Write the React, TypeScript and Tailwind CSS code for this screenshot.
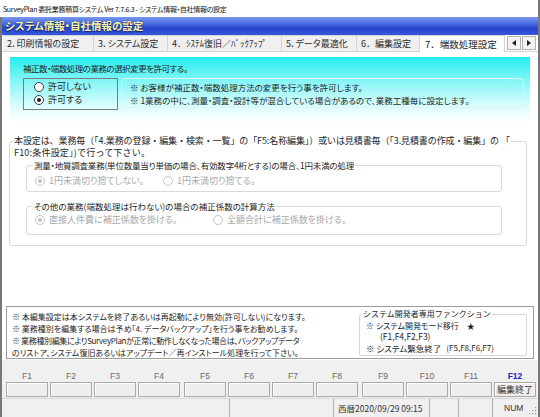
import React from "react";

function Radio({
  checked,
  disabled,
  label,
  className = "",
}: {
  checked?: boolean;
  disabled?: boolean;
  label: string;
  className?: string;
}) {
  return (
    <div className={`flex items-center gap-[4px] ${className}`}>
      <span
        className={`w-[10px] h-[10px] shrink-0 rounded-full border bg-white flex items-center justify-center ${
          disabled ? "border-[#c6c6c6]" : "border-[#3a3a3a]"
        }`}
      >
        {checked && (
          <span
            className={`w-[4px] h-[4px] rounded-full ${disabled ? "bg-[#c2c2c2]" : "bg-[#1a1a1a]"}`}
          />
        )}
      </span>
      <span className={`whitespace-nowrap text-[9px] ${disabled ? "text-[#a8a8a8]" : "text-[#1e1e1e]"}`}>{label}</span>
    </div>
  );
}

const tabs = [
  { label: "2．印刷情報の設定", cls: "w-[91px]" },
  { label: "3．システム設定", cls: "w-[74px]" },
  { label: "4．ｼｽﾃﾑ復旧／ﾊﾞｯｸｱｯﾌﾟ", cls: "w-[114px] [font-feature-settings:normal]" },
  { label: "5．データ最適化", cls: "w-[75px]" },
  { label: "6．編集設定", cls: "w-[63px] [font-feature-settings:normal]" },
];

const groups = [
  ["F1", "F2", "F3", "F4"],
  ["F5", "F6", "F7", "F8"],
  ["F9", "F10", "F11", "F12"],
];

export default function App() {
  return (
    <div className="w-[540px] h-[417px] overflow-hidden bg-white flex flex-col font-['Noto_Sans_CJK_JP','Noto_Sans',sans-serif] [font-feature-settings:'palt'] text-[8.5px] leading-[12px] text-[#1e1e1e]">
      {/* title bar */}
      <div className="h-[17px] shrink-0 flex items-center pl-[3px] border-r-2 border-[#777777] text-[7px] tracking-[-0.3px] text-[#111] whitespace-nowrap">
        SurveyPlan 委託業務積算システム Ver 7.7.6.3 - システム情報・自社情報の設定
      </div>

      <div className="flex-1 min-h-0 flex flex-col border-l-2 border-r-2 border-[#777777]">
        {/* blue header */}
        <div className="h-[18px] shrink-0 flex items-center pl-[3px] bg-[linear-gradient(180deg,#7a99ef_0%,#4b6ee3_35%,#2444cf_65%,#3758dc_100%)]">
          <span className="text-[10.5px] leading-[12px] font-bold text-[#f6f6a4] [text-shadow:0_0_1px_#10207a,0_1px_1px_#10207a]">
            システム情報・自社情報の設定
          </span>
        </div>

        {/* tabs */}
        <div className="h-[17px] shrink-0 flex bg-white text-[9px]">
          <div className="w-[1px] border-b border-[#d4d4d4]" />
          {tabs.map((t) => (
            <div
              key={t.label}
              className={`${t.cls} h-full flex items-center pl-[4px] bg-[#f0f0f0] border-t border-r border-b border-[#d4d4d4] text-[#2a2a2a] whitespace-nowrap`}
            >
              {t.label}
            </div>
          ))}
          <div className="w-[85px] h-full flex items-center pl-[5px] bg-white border-t border-r border-[#d4d4d4] text-[#1e1e1e] whitespace-nowrap text-[9.5px] [font-feature-settings:normal]">
            7．端数処理設定
          </div>
          <div className="flex-1 h-full flex items-center gap-[1px] pl-[2px] border-b border-[#d4d4d4]">
            <div className="w-[14px] h-[14px] border border-[#b4b4b4] bg-[#f4f4f4] flex items-center justify-center">
              <svg width="4" height="6" viewBox="0 0 4 6">
                <path d="M4 0 L0 3 L4 6 Z" fill="#222" />
              </svg>
            </div>
            <div className="w-[14px] h-[14px] border border-[#b4b4b4] bg-[#f4f4f4] flex items-center justify-center">
              <svg width="4" height="6" viewBox="0 0 4 6">
                <path d="M0 0 L4 3 L0 6 Z" fill="#222" />
              </svg>
            </div>
          </div>
        </div>

        {/* content */}
        <div className="flex-1 min-h-0 flex flex-col bg-white pt-[5px]">
          {/* cyan panel */}
          <div className="mx-[8px] h-[65px] shrink-0 pl-[13px] pt-[5px] bg-[linear-gradient(180deg,#22eeee_0%,#8cf6f6_40%,#d9fdfd_75%,#ffffff_100%)]">
            <div className="h-[12px] tracking-[-0.5px]">補正数・端数処理の業務の選択変更を許可する。</div>
            <div className="mt-[4px] flex items-start">
              <div className="w-[95px] h-[32px] border border-[#7c7c7c] pl-[10px] pt-[1px] flex flex-col">
                <Radio label="許可しない" className="h-[13px]" />
                <Radio label="許可する" checked className="h-[13px]" />
              </div>
              <div className="ml-[3px] mr-[6px] flex-1 h-[30px] pl-[8px] pt-[1px] border border-[#e2f2f2] rounded-[4px] flex flex-col">
                <div className="h-[13px] flex items-center">※ お客様が補正数・端数処理方法の変更を行う事を許可します。</div>
                <div className="h-[13px] flex items-center">
                  ※ 1業務の中に、測量・調査・設計等が混合している場合があるので、業務工種毎に設定します。
                </div>
              </div>
            </div>
          </div>

          {/* outer group */}
          <fieldset className="mt-[13px] ml-[7px] mr-[11px] shrink-0 border border-[#d8d8d8] rounded-[3px] pb-[10px]">
            <legend className="ml-[3px] px-[1px] h-[12px] whitespace-nowrap leading-[12px] text-[9px] tracking-[-0.1px] [font-feature-settings:normal]">
              本設定は、業務毎（「4.業務の登録・編集・検索・一覧」の「F5:名称編集」）或いは見積書毎（「3.見積書の作成・編集」の 「
            </legend>
            <div className="pl-[4px] h-[12px] text-[9px] tracking-[0.2px] [font-feature-settings:normal]">
              F10:条件設定」)で行って下さい。
            </div>

            <fieldset className="ml-[16px] mr-[24px] border border-[#d8d8d8] rounded-[3px] pt-[4px] pb-[4px]">
              <legend className="ml-[6px] px-[1px] h-[12px] whitespace-nowrap tracking-[-0.2px]">
                測量・地質調査業務(単位数量当り単価の場合、有効数字4桁とする)の場合、1円未満の処理
              </legend>
              <div className="flex pl-[8px] h-[12px]">
                <Radio disabled checked label="1円未満切り捨てしない。" className="w-[128px]" />
                <Radio disabled label="1円未満切り捨てる。" />
              </div>
            </fieldset>

            <fieldset className="mt-[8px] ml-[16px] mr-[24px] border border-[#d8d8d8] rounded-[3px] pt-[2px] pb-[8px]">
              <legend className="ml-[6px] px-[1px] h-[12px] whitespace-nowrap">
                その他の業務(端数処理は行わない)の場合の補正係数の計算方法
              </legend>
              <div className="flex pl-[8px] h-[12px]">
                <Radio disabled checked label="直接人件費に補正係数を掛ける。" className="w-[178px]" />
                <Radio disabled label="全額合計に補正係数を掛ける。" />
              </div>
            </fieldset>
          </fieldset>

          <div className="flex-1" />

          {/* notes box */}
          <div className="mx-[4px] mb-[1px] h-[53px] shrink-0 border border-[#9c9c9c] flex">
            <div className="flex-1 pl-[5px] pt-[4px] flex flex-col whitespace-nowrap text-[8px]">
              <div className="h-[12px]">※ 本編集設定は本システムを終了あるいは再起動により無効(許可しない)になります。</div>
              <div className="h-[12px]">※ 業務種別を編集する場合は予め「4. データバックアップ」を行う事をお勧めします。</div>
              <div className="h-[12px] tracking-[-0.35px]">
                ※ 業務種別編集によりSurveyPlanが正常に動作しなくなった場合は、バックアップデータ
              </div>
              <div className="h-[12px]">のリストア、システム復旧あるいはアップデート／再インストール処理を行って下さい。</div>
            </div>
            <fieldset className="w-[168px] mr-[6px] mt-[1px] mb-[2px] border border-[#d8d8d8] rounded-[2px] pl-[6px]">
              <legend className="-ml-[4px] px-[1px] whitespace-nowrap text-[8px] [font-feature-settings:normal]">
                システム開発者専用ファンクション
              </legend>
              <div className="h-[11px] flex items-center text-[8px]">※ システム開発モード移行　★</div>
              <div className="h-[10px] flex items-center pl-[14px] text-[8.5px]">(F1,F4,F2,F3)</div>
              <div className="h-[12px] mt-[1px] flex items-center">
                ※ システム緊急終了<span className="ml-[5px] text-[8px]">(F5,F8,F6,F7)</span>
              </div>
            </fieldset>
          </div>
        </div>

        {/* function keys */}
        <div className="h-[38px] shrink-0 bg-[#f0f0f0] flex items-end gap-[4px] pl-[4px] pb-[1px]">
          {groups.map((g, gi) => (
            <div key={gi} className="flex gap-[2px]">
              {g.map((k) => (
                <div key={k} className="w-[42px] flex flex-col items-center">
                  <span
                    className={`h-[10px] leading-[10px] text-[8.5px] font-['Liberation_Sans',sans-serif] ${
                      k === "F12" ? "font-bold text-[#1c20c8]" : "text-[#6a6a6a]"
                    }`}
                  >
                    {k}
                  </span>
                  <div className="mt-[1px] w-full h-[15px] border border-[#a9a9a9] bg-[#eeeeee] shadow-[inset_1px_1px_0_#ffffff] flex items-center justify-center text-[#333] text-[9px]">
                    {k === "F12" ? "編集終了" : ""}
                  </div>
                </div>
              ))}
            </div>
          ))}
        </div>

        {/* status bar */}
        <div className="h-[19px] shrink-0 bg-[#f0f0f0] border-t border-[#d6d6d6] flex text-[#333]">
          <div className="w-[227px]" />
          <div className="w-[104px] border-l border-[#b0b0b0]" />
          <div className="w-[96px] border-l border-[#b0b0b0] flex items-center pl-[4px] whitespace-nowrap text-[8.5px]">
            西暦2020/09/29 09:15
          </div>
          <div className="w-[29px] border-l border-[#b0b0b0]" />
          <div className="w-[34px] border-l border-[#b0b0b0]" />
          <div className="flex-1 border-l border-[#b0b0b0] flex items-center pl-[11px] relative text-[8.5px] font-['Liberation_Sans',sans-serif]">
            NUM
            <svg className="absolute right-[1px] bottom-[2px]" width="8" height="8" viewBox="0 0 8 8">
              <rect x="6" y="0" width="1.2" height="1.2" fill="#9a9a9a" />
              <rect x="3" y="3" width="1.2" height="1.2" fill="#9a9a9a" />
              <rect x="6" y="3" width="1.2" height="1.2" fill="#9a9a9a" />
              <rect x="0" y="6" width="1.2" height="1.2" fill="#9a9a9a" />
              <rect x="3" y="6" width="1.2" height="1.2" fill="#9a9a9a" />
              <rect x="6" y="6" width="1.2" height="1.2" fill="#9a9a9a" />
            </svg>
          </div>
        </div>
      </div>
    </div>
  );
}
